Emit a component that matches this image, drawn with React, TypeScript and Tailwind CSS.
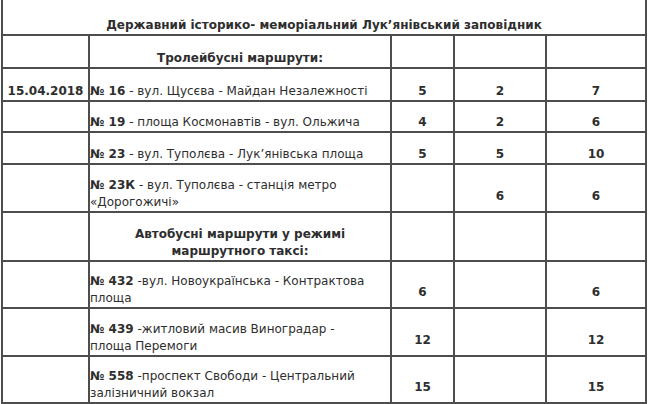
import React from "react";

type Row = {
  h: string;
  date?: string;
  num?: string;
  rest?: React.ReactNode;
  heading?: React.ReactNode;
  a?: string;
  b?: string;
  c?: string;
  two?: boolean;
};

const rows: Row[] = [
  { h: "h-[33px]", heading: "Тролейбусні маршрути:" },
  { h: "h-[33px]", date: "15.04.2018", num: "№ 16", rest: " - вул. Щусєва - Майдан Незалежності", a: "5", b: "2", c: "7" },
  { h: "h-[31px]", num: "№ 19", rest: " - площа Космонавтів - вул. Ольжича", a: "4", b: "2", c: "6" },
  { h: "h-[32px]", num: "№ 23", rest: " - вул. Туполєва - Лук’янівська площа", a: "5", b: "5", c: "10" },
  {
    h: "h-[48px]",
    num: "№ 23К",
    rest: (
      <>
        {" - вул. Туполєва - станція метро"}
        <br />
        «Дорогожичі»
      </>
    ),
    b: "6",
    c: "6",
    two: true,
  },
  {
    h: "h-[49px]",
    heading: (
      <>
        Автобусні маршрути у режимі
        <br />
        маршрутного таксі:
      </>
    ),
  },
  {
    h: "h-[47px]",
    num: "№ 432",
    rest: (
      <>
        {" -вул. Новоукраїнська - Контрактова"}
        <br />
        площа
      </>
    ),
    a: "6",
    c: "6",
    two: true,
  },
  {
    h: "h-[48px]",
    num: "№ 439",
    rest: (
      <>
        {" -житловий масив Виноградар -"}
        <br />
        площа Перемоги
      </>
    ),
    a: "12",
    c: "12",
    two: true,
  },
  {
    h: "h-[47px]",
    num: "№ 558",
    rest: (
      <>
        {" -проспект Свободи - Центральний"}
        <br />
        залізничний вокзал
      </>
    ),
    a: "15",
    c: "15",
    two: true,
  },
];

const cell = "border-2 border-[#4d4d4d] p-0 align-bottom";

function Num({ v, two }: { v?: string; two?: boolean }) {
  return (
    <td className={`${cell} text-center font-bold ${two ? "pb-[6px]" : ""}`}>
      {v ?? ""}
    </td>
  );
}

export default function App() {
  return (
    <div
      className="w-[649px] h-[404px] overflow-hidden bg-white text-[#2e2e2e] text-[12px] leading-[17px]"
      style={{ fontFamily: '"DejaVu Sans", Verdana, sans-serif' }}
    >
      <table className="ml-px w-[646px] table-fixed border-collapse">
        <colgroup>
          <col className="w-[87px]" />
          <col className="w-[302px]" />
          <col className="w-[63px]" />
          <col className="w-[92px]" />
          <col className="w-[100px]" />
        </colgroup>
        <tbody>
          <tr className="h-[35px]">
            <td
              colSpan={5}
              className={`${cell} border-t-0 text-center font-bold`}
            >
              Державний історико- меморіальний Лук’янівський заповідник
            </td>
          </tr>
          {rows.map((r, i) => (
            <tr key={i} className={r.h}>
              <td className={`${cell} text-center font-bold`}>{r.date ?? ""}</td>
              {r.heading ? (
                <td className={`${cell} text-center font-bold`}>{r.heading}</td>
              ) : (
                <td className={`${cell} text-left`}>
                  <span className="font-bold">{r.num}</span>
                  {r.rest}
                </td>
              )}
              <Num v={r.a} two={r.two} />
              <Num v={r.b} two={r.two} />
              <Num v={r.c} two={r.two} />
            </tr>
          ))}
        </tbody>
      </table>
    </div>
  );
}
